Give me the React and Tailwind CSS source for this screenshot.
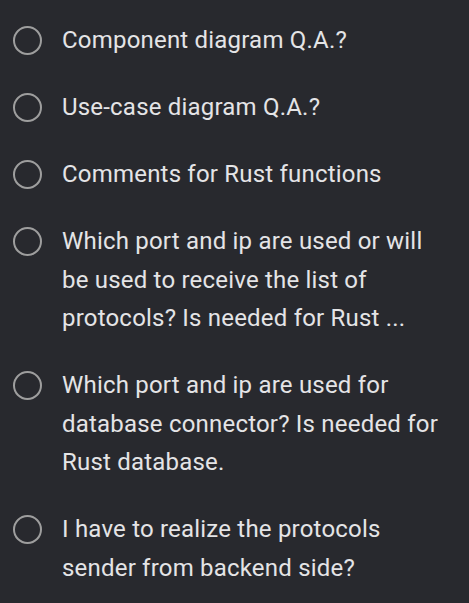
import React from "react";

const items = [
  "Component diagram Q.A.?",
  "Use-case diagram Q.A.?",
  "Comments for Rust functions",
  "Which port and ip are used or will be used to receive the list of protocols? Is needed for Rust ...",
  "Which port and ip are used for database connector? Is needed for Rust database.",
  "I have to realize the protocols sender from backend side?",
];

export default function App() {
  return (
    <div className="w-[469px] h-[603px] bg-[#28292e] overflow-hidden font-['Roboto',sans-serif] text-[#e4e4e6]">
      <ul className="pt-[7px] pl-[13px] pr-[24px]">
        {items.map((t, i) => (
          <li key={i} className="flex items-start py-[14.25px]">
            <div className="h-[38.5px] flex items-center shrink-0">
              <div className="w-[29px] h-[29px] rounded-full border-[2.5px] border-[#9e9e9e]" />
            </div>
            <p className="ml-[20px] text-[24px] tracking-[0.2px] leading-[38.5px]">{t}</p>
          </li>
        ))}
      </ul>
    </div>
  );
}
